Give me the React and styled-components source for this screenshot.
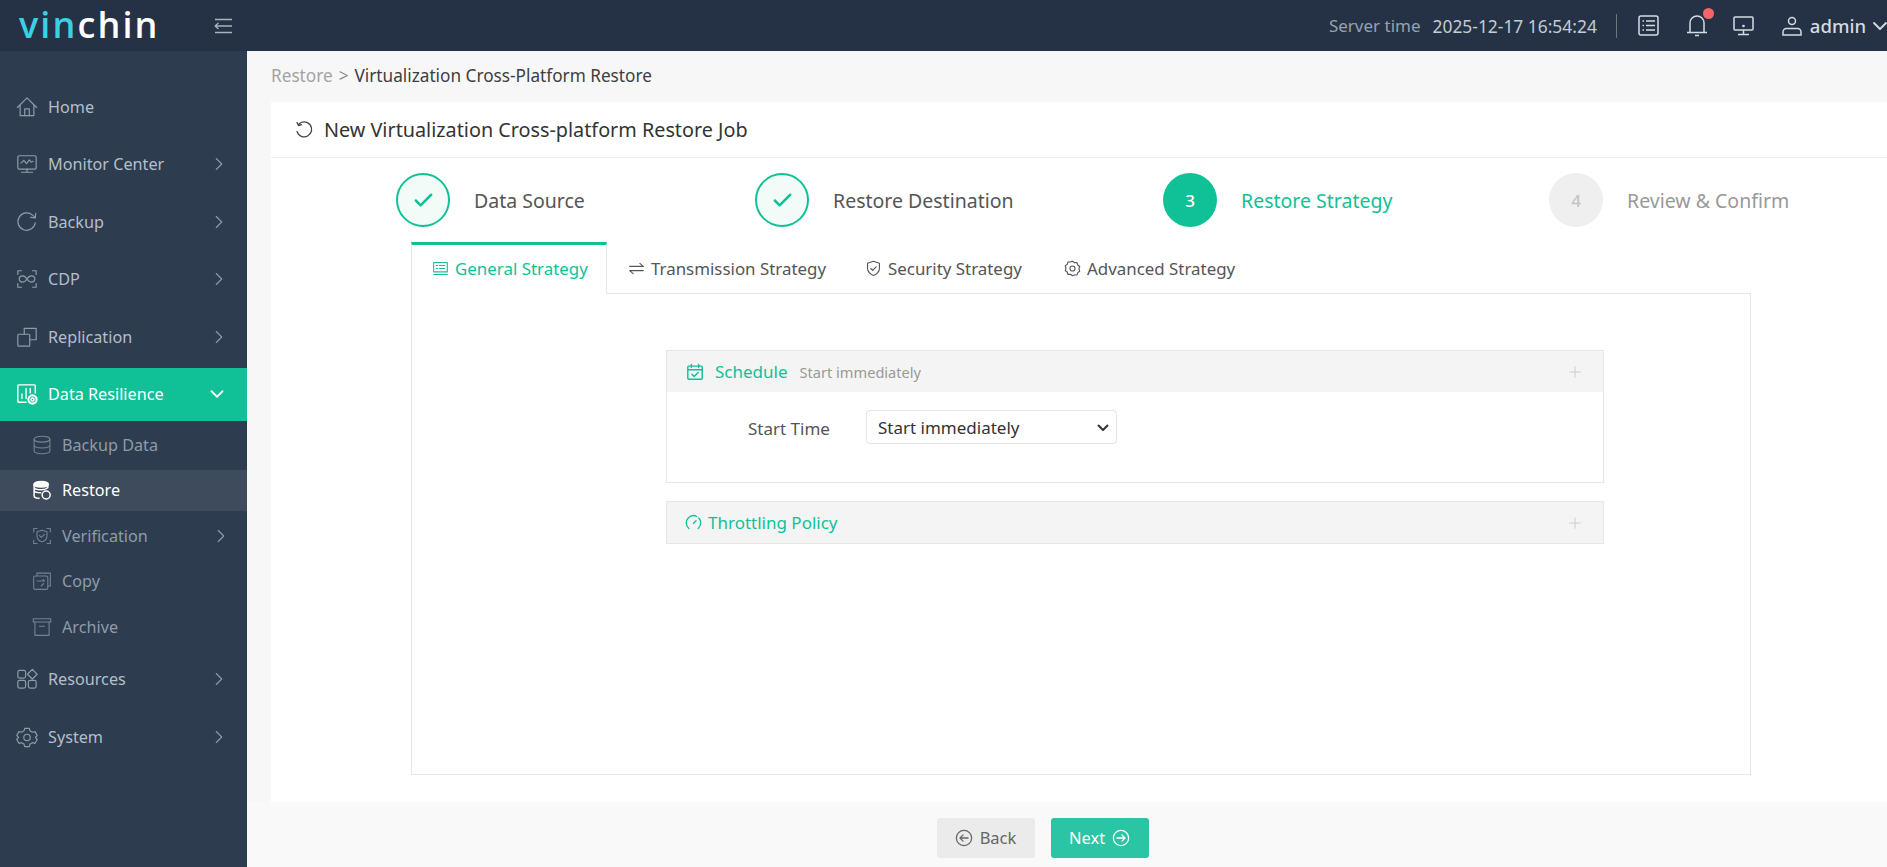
import React from "react";
import styled, { createGlobalStyle } from "styled-components";
import { ChevronRight, ChevronDown, Check, Plus } from "lucide-react";

const FONT = `"Noto Sans", "Noto Sans CJK SC", "Liberation Sans", sans-serif`;
const GREEN = "#10c197";
const SELECT_ARROW = `url("data:image/svg+xml,%3Csvg xmlns='http://www.w3.org/2000/svg' width='12' height='7' viewBox='0 0 12 7' fill='none' stroke='%23333' stroke-width='2'%3E%3Cpath d='M1 1l5 5 5-5'/%3E%3C/svg%3E")`;

const Global = createGlobalStyle`
  html, body { margin: 0; padding: 0; height: 100%; background: #fff; }
  body { font-family: ${FONT}; overflow: hidden; }
  #root { height: 100%; }
  * { box-sizing: border-box; }
`;

const Shell = styled.div`
  width: 1887px; height: 867px; display: grid;
  grid-template-rows: 51px 1fr; grid-template-columns: 247px 1fr;
`;

/* ---------- top bar ---------- */
const TopBar = styled.header`
  grid-column: 1 / -1; background: #253245; display: flex; align-items: center;
  padding-left: 19px; color: #c9d1da; overflow: hidden;
`;
const Logo = styled.div`
  width: 195px; font-family: "Open Sans", sans-serif; font-weight: 600; font-size: 36px; line-height: 49px;
  letter-spacing: 2.1px; color: #fff; align-self: flex-start;
`;
const LogoCyan = styled.span` color: #3bd0e2; `;
const TopRight = styled.div`
  margin-left: auto; display: flex; align-items: center; height: 100%;
`;
const ServerLabel = styled.span` font-size: 17px; color: #96a2ae; margin-right: 12px; `;
const ServerTime = styled.span` font-size: 17.4px; color: #c4ccd4; `;
const VDivider = styled.span` width: 1px; height: 24px; background: #69757f; margin: 0 21px 0 19px; `;
const TopIcon = styled.span`
  position: relative; display: inline-flex; margin-right: ${p => p.$mr}px; color: #d5dbe2;
`;
const Dot = styled.span`
  position: absolute; right: -6px; top: -6px; width: 11px; height: 11px; border-radius: 50%; background: #f5646a;
`;
const AdminName = styled.span` font-size: 18.5px; color: #d5dbe2; margin: 0 1.5px 0 8px; font-weight: 500; `;
const AdminArrow = styled.span` display: inline-flex; margin-right: -4.5px; color: #d5dbe2; `;

/* ---------- side bar ---------- */
const Side = styled.nav`
  background: #2e3c4f; padding-top: 29.5px; display: flex; flex-direction: column;
`;
const MenuItem = styled.div`
  height: 53px; margin-bottom: ${p => (p.$on ? 0 : 4.5)}px; flex: none; display: flex; align-items: center; padding-left: 16px; padding-right: ${p => (p.$on ? 19.5 : 17)}px;
  font-size: 16.2px; gap: 10px; padding-bottom: 1px;
  color: ${p => (p.$on ? "#fff" : "#b4bfca")};
  background: ${p => (p.$on ? GREEN : "transparent")};
  svg.ic { color: ${p => (p.$on ? "#fff" : "#8e9bab")}; flex: none; }
`;
const SubList = styled.div` padding: 3.5px 0 1px; `;
const SubItem = styled.div`
  height: 41px; margin-bottom: 4.5px; display: flex; align-items: center; padding-left: 32px; padding-right: 15px; gap: 10px;
  font-size: 16.2px; padding-bottom: 1px;
  color: ${p => (p.$on ? "#fff" : "#8e9bab")};
  background: ${p => (p.$on ? "#3e4b5c" : "transparent")};
  svg.ic { flex: none; color: ${p => (p.$on ? "#fff" : "#738396")}; }
`;
const Arrow = styled.span` margin-left: auto; display: inline-flex; color: ${p => (p.$on ? "#fff" : "#8e9bab")}; `;

/* ---------- main ---------- */
const Main = styled.main` display: flex; flex-direction: column; min-width: 0; background: #f7f7f7; `;
const Crumbs = styled.div`
  height: 51px; flex: none; padding: 0 0 2px 24px; display: flex; align-items: center; font-size: 17.2px; color: #3a3f45;
`;
const CrumbMuted = styled.span` color: #a3a3a3; margin-right: 6px; `;
const CrumbSep = styled.span` color: #8a8a8a; margin-right: 6px; `;
const Card = styled.section` margin-left: 24px; flex: 1; background: #fff; display: flex; flex-direction: column; min-height: 0; `;
const TitleRow = styled.div`
  height: 56px; flex: none; padding-left: 24px; display: flex; align-items: center; gap: 11px;
  border-bottom: 1px solid #eeeeee; font-size: 19.8px; color: #333;
`;
const Steps = styled.div` padding: 15px 0 0 125px; display: flex; height: 84px; flex: none; `;
const Step = styled.div` width: ${p => p.$w}px; flex: none; display: flex; align-items: flex-start; gap: 24px; `;
const Circle = styled.div`
  width: 54px; height: 54px; border-radius: 50%; flex: none; display: flex; align-items: center; justify-content: center;
  font-size: 17px; font-weight: 500;
  ${p => p.$kind === "done" && `border: 2px solid ${GREEN}; background: #f3fbf9; color: ${GREEN};`}
  ${p => p.$kind === "now" && `background: ${GREEN}; color: #fff;`}
  ${p => p.$kind === "todo" && `background: #efefef; color: #c4c4c4;`}
`;
const StepLabel = styled.div`
  font-size: 19.5px; line-height: 54px; padding-top: 1px;
  color: ${p => (p.$kind === "now" ? GREEN : p.$kind === "todo" ? "#999" : "#555")};
`;
const Tabs = styled.div` margin-left: 140px; display: flex; height: 51px; flex: none; position: relative; z-index: 1; `;
const Tab = styled.div`
  width: ${p => p.$w}px; flex: none; display: flex; align-items: center; gap: 6px; height: 52px; font-size: 16.9px; padding-left: ${p => p.$pl}px;
  color: ${p => (p.$on ? GREEN : "#555")};
  ${p => p.$on && `border-top: 3px solid ${GREEN}; border-left: 1px solid #e6e6e6; border-right: 1px solid #e6e6e6; background: #fff; padding-bottom: 2px;`}
`;
const Panel = styled.div`
  margin-left: 140px; width: 1340px; height: 482px; flex: none; border: 1px solid #e6e6e6; padding: 56px 0 0 254px;
`;
const Acc = styled.div` width: 938px; border: 1px solid #e6e6e6; margin-bottom: ${p => p.$mb || 0}px; `;
const AccHead = styled.div`
  height: ${p => p.$h}px; background: #f4f4f4; display: flex; align-items: center; padding: 0 19px 0 ${p => p.$pl}px; color: ${GREEN}; font-size: 17px;
`;
const AccLabel = styled.span` margin-left: ${p => p.$ml}px; `;
const AccHint = styled.span` font-size: 14.6px; color: #999; margin-left: 12px; `;
const PlusBox = styled.span` margin-left: auto; display: inline-flex; color: #c8c8c8; `;
const AccBody = styled.div` height: 90px; padding: 18px 0 0 81px; display: flex; align-items: flex-start; `;
const FieldLabel = styled.label` font-size: 17px; color: #555; width: 118px; line-height: 38px; `;
const Select = styled.select`
  width: 251px; height: 34px; border: 1px solid #e4e4e4; border-radius: 4px; color: #333;
  font-family: ${FONT}; font-size: 17px; padding: 0 0 0 11px; appearance: none;
  background: #fff ${SELECT_ARROW} no-repeat right 7px center;
`;
const Footer = styled.footer`
  height: 65px; flex: none; background: #f9f9f9; display: flex; justify-content: center; align-items: center; gap: 16px; padding: 6px 50px 0 1px;
`;
const Btn = styled.button`
  width: 98px; height: 40px; border: 0; border-radius: 3px; display: flex; align-items: center; justify-content: center; gap: 7px;
  font-family: ${FONT}; font-size: 16.5px; padding: 0;
  background: ${p => (p.$primary ? "#2bc4a4" : "#ebebeb")};
  color: ${p => (p.$primary ? "#fff" : "#666")};
`;

/* ---------- drawings ---------- */
const Ic = ({ size = 22, children, sw = 1.3 }) => (
  <svg className="ic" width={size} height={size} viewBox="0 0 24 24" fill="none" stroke="currentColor" strokeWidth={sw} strokeLinecap="round" strokeLinejoin="round">{children}</svg>
);
const HomeIc = () => <Ic><path d="M1.5 12.5 12 2l10.5 10.5M4.5 10v11.5h15V10" /><path d="M9.5 21.5V14h5v7.5" /></Ic>;
const MonitorIc = () => <Ic><rect x="2" y="3" width="20" height="14.5" rx="1.5" /><path d="M5.5 11l3-3 3 3.5 3-4 2 2.5 2-1M12 17.5v3M6 21h12" /></Ic>;
const BackupIc = () => <Ic><path d="M21 13a9.5 9.5 0 1 1-3-8.5L21 7" /><path d="M21.500 2.500 21 7.500l-5-.5" /></Ic>;
const CdpIc = () => <Ic><path d="M2 7V3h4M18 3h4v4M2 17v4h4M18 21h4v-4" /><path d="M12 12c-1.500-2.500-3-3.500-5-3.500a3.500 3.500 0 0 0 0 7c2 0 3.500-1 5-3.500s3-3.500 5-3.500a3.500 3.500 0 0 1 0 7c-2 0-3.500-1-5-3.500z" /></Ic>;
const ReplIc = () => <Ic><rect x="2" y="9" width="13" height="13" rx="1" /><path d="M9 9V2.500h13V15h-7" /></Ic>;
const ResilIc = () => (
  <Ic sw={1.5}>
    <path d="M11 21H3a1 1 0 0 1-1-1V3a1 1 0 0 1 1-1h17a1 1 0 0 1 1 1v8" />
    <path d="M6.500 17v-5M11 17V6M15.500 11V6" />
    <circle cx="18" cy="18" r="4.500" strokeWidth="2.200" strokeDasharray="2.200 1" />
    <circle cx="18" cy="18" r="1.700" />
  </Ic>
);
const DbIc = () => <Ic size={20}><ellipse cx="12" cy="5" rx="9.500" ry="3.500" /><path d="M2.500 5v14c0 2 4.300 3.500 9.500 3.500s9.500-1.500 9.500-3.500V5M2.500 12c0 2 4.300 3.500 9.500 3.500s9.500-1.500 9.500-3.500" /></Ic>;
const RestoreIc = () => (
  <Ic size={20} sw={1.8}>
    <ellipse cx="11" cy="5" rx="8.500" ry="3.300" fill="currentColor" />
    <path d="M2.500 5v14c0 2 3 3 6 3M2.500 12c0 2 3 3.300 8 3.300M2.500 8.500c0 2 3 3.300 8.500 3.300 3 0 6-1 8-2.500V5" />
    <circle cx="17" cy="18" r="4.800" fill="#3e4b5c" />
  </Ic>
);
const VerifyIc = () => <Ic size={20}><path d="M2 7V3h4M18 3h4v4M2 17v4h4M18 21h4v-4" /><path d="M12 5l6 2v5c0 3.500-2.500 6-6 7-3.500-1-6-3.500-6-7V7z" /><path d="M9 11.500l2.200 2.200L15 10" /></Ic>;
const CopyIc = () => <Ic size={20}><path d="M6 5V2.500h16V18h-3" /><rect x="2" y="6" width="17" height="16" rx="2" /><path d="M6 12h9l-2-2M14 15l-3 3" /></Ic>;
const ArchiveIc = () => <Ic size={20}><rect x="1.500" y="2" width="21" height="4" /><path d="M3.500 6v16h17V6M9 11h6" /></Ic>;
const ResIc = () => <Ic><rect x="2" y="2.500" width="8.500" height="8.500" rx="2" /><rect x="2" y="13.500" width="8.500" height="8.500" rx="2" /><rect x="13.500" y="13.500" width="8.500" height="8.500" rx="2" /><path d="M17.800 1.500 23 6.800l-5.200 5.200-5.300-5.200z" /></Ic>;
const GearIc = ({ size = 22 }) => (
  <Ic size={size}>
    <path d="M9.500 2.500h5l.8 2.800 2.600 1.500 2.900-.7 2.400 4.200-2 2.200v0l2 2.200-2.400 4.200-2.900-.7-2.600 1.500-.8 2.800h-5l-.8-2.800-2.600-1.500-2.900.7L.8 14.700l2-2.200-2-2.200L3.200 6.100l2.900.7 2.600-1.500z" />
    <circle cx="12" cy="12.500" r="3.500" />
  </Ic>
);
const MenuFold = () => (
  <svg width="18" height="16" viewBox="0 0 18 16" fill="none" stroke="#a9b3be" strokeWidth="1.300" style={{ flex: "none" }}>
    <path d="M1 1.500h17M1 14.500h17M1 8h17M1 8l3.500-3M1 8l3.500 3" />
  </svg>
);

const Tiny = ({ size = 17, children, sw = 1.300 }) => (
  <svg width={size} height={size} viewBox="0 0 20 20" fill="none" stroke="currentColor" strokeWidth={sw} strokeLinecap="round" strokeLinejoin="round" style={{ flex: "none" }}>{children}</svg>
);
const ListTab = () => <Tiny><rect x="2" y="3" width="16" height="11" /><path d="M5 6.500h1.500M8.500 6.500H15M5 10h1.500M8.500 10H15M2 17h16" /></Tiny>;
const SwapTab = () => <Tiny><path d="M2 7.500h16L14 4M18 12.500H2L6 16" /></Tiny>;
const ShieldTab = () => <Tiny><path d="M10 1.500l7 2.300v6c0 4-3 6.800-7 8.500-4-1.700-7-4.500-7-8.500v-6z" /><path d="M6.800 10l2.300 2.300 4-4.300" /></Tiny>;
const AdvTab = () => <Tiny><path d="M10 1.500l2.400 1.700 2.900-.1.900 2.800 2.300 1.700-.9 2.800.9 2.800-2.300 1.700-.9 2.800-2.900-.1L10 18.500l-2.400-1.700-2.900.1-.9-2.800-2.300-1.700.9-2.800-.9-2.800 2.300-1.700.9-2.800 2.900.1z" /><circle cx="10" cy="10" r="3" /></Tiny>;
const CalIc = () => <Tiny size={18} sw={1.600}><rect x="2" y="3.500" width="16" height="14.500" rx="1" /><path d="M2 7.500h16M6 1.500v3.500M14 1.500v3.500M6.500 12.500l2.500 2.500 4.500-4.500" /></Tiny>;
const GaugeIc = () => <Tiny size={17} sw={1.600}><path d="M4.500 17a8.500 8.500 0 1 1 11 0" strokeDasharray="24 3 30" /><path d="M10 11l3-3" /></Tiny>;
const CircleArrow = ({ dir }) => (
  <Tiny size={18} sw={1.400}>
    <circle cx="10" cy="10" r="8.500" />
    {dir === "l" ? <path d="M14.500 10h-9M9 6.500 5.500 10 9 13.500" /> : <path d="M5.500 10h9M11 6.500l3.500 3.500-3.500 3.500" />}
  </Tiny>
);
const RefreshTitle = () => (
  <svg width="18" height="18" viewBox="0 0 18 18" fill="none" stroke="#444" strokeWidth="1.300" strokeLinecap="round" strokeLinejoin="round" style={{ flex: "none" }}>
    <path d="M3.500 3.500A7.500 7.500 0 1 1 2 10.500" /><path d="M2 1.500l1.500 3 3-.800" />
  </svg>
);
const Right = () => <Arrow><ChevronRight size={22} strokeWidth={1.200} /></Arrow>;

const menu = [
  { t: "Home", I: HomeIc },
  { t: "Monitor Center", I: MonitorIc, a: 1 },
  { t: "Backup", I: BackupIc, a: 1 },
  { t: "CDP", I: CdpIc, a: 1 },
  { t: "Replication", I: ReplIc, a: 1 },
];
const subs = [
  { t: "Backup Data", I: DbIc },
  { t: "Restore", I: RestoreIc, on: 1 },
  { t: "Verification", I: VerifyIc, a: 1 },
  { t: "Copy", I: CopyIc },
  { t: "Archive", I: ArchiveIc },
];

export default function App() {
  return (
    <>
      <Global />
      <Shell>
        <TopBar>
          <Logo><LogoCyan>vin</LogoCyan>chin</Logo>
          <MenuFold />
          <TopRight>
            <ServerLabel>Server time</ServerLabel>
            <ServerTime>2025-12-17 16:54:24</ServerTime>
            <VDivider />
            <TopIcon $mr={27}>
              <svg width="21" height="21" viewBox="0 0 21 21" fill="none" stroke="currentColor" strokeWidth="1.500"><rect x="1" y="1" width="19" height="19" rx="2" /><path d="M4.500 6h1.500M8 6h9M4.500 10.500h1.500M8 10.500h9M4.500 15h1.500M8 15h9" /></svg>
            </TopIcon>
            <TopIcon $mr={25}>
              <svg width="22" height="23" viewBox="0 0 22 23" fill="none" stroke="currentColor" strokeWidth="1.500"><path d="M1 18.500h20M4 18.500V9a7 7 0 0 1 14 0v9.500M9 21.500h4" /></svg>
              <Dot />
            </TopIcon>
            <TopIcon $mr={28}>
              <svg width="21" height="21" viewBox="0 0 21 21" fill="none" stroke="currentColor" strokeWidth="1.500"><rect x="1" y="2" width="19" height="13" rx="1" /><path d="M10.500 15v4M5 19.500h11" /><circle cx="10.500" cy="11" r=".6" /></svg>
            </TopIcon>
            <TopIcon $mr={0}>
              <svg width="20" height="20" viewBox="0 0 20 20" fill="none" stroke="currentColor" strokeWidth="1.500"><circle cx="10" cy="5" r="3.500" /><path d="M1 19v-3a3.500 3.500 0 0 1 3.500-3.500h11A3.500 3.500 0 0 1 19 16v3z" /></svg>
            </TopIcon>
            <AdminName>admin</AdminName>
            <AdminArrow><ChevronDown size={24} strokeWidth={1.800} /></AdminArrow>
          </TopRight>
        </TopBar>

        <Side>
          {menu.map(({ t, I, a }) => (
            <MenuItem key={t}>
              <I />{t}
              {a && <Right />}
            </MenuItem>
          ))}
          <MenuItem $on>
            <ResilIc />Data Resilience
            <Arrow $on><ChevronDown size={22} strokeWidth={2} /></Arrow>
          </MenuItem>
          <SubList>
            {subs.map(({ t, I, on, a }) => (
              <SubItem key={t} $on={on}>
                <I />{t}
                {a && <Right />}
              </SubItem>
            ))}
          </SubList>
          <MenuItem><ResIc />Resources<Right /></MenuItem>
          <MenuItem><GearIc />System<Right /></MenuItem>
        </Side>

        <Main>
          <Crumbs>
            <CrumbMuted>Restore</CrumbMuted><CrumbSep>&gt;</CrumbSep>Virtualization Cross-Platform Restore
          </Crumbs>
          <Card>
            <TitleRow><RefreshTitle />New Virtualization Cross-platform Restore Job</TitleRow>
            <Steps>
              <Step $w={359}><Circle $kind="done"><Check size={23} strokeWidth={2.6} /></Circle><StepLabel>Data Source</StepLabel></Step>
              <Step $w={408}><Circle $kind="done"><Check size={23} strokeWidth={2.6} /></Circle><StepLabel>Restore Destination</StepLabel></Step>
              <Step $w={386}><Circle $kind="now">3</Circle><StepLabel $kind="now">Restore Strategy</StepLabel></Step>
              <Step $w={300}><Circle $kind="todo">4</Circle><StepLabel $kind="todo">Review &amp; Confirm</StepLabel></Step>
            </Steps>
            <Tabs>
              <Tab $on $w={196} $pl={20}><ListTab />General Strategy</Tab>
              <Tab $w={236} $pl={21}><SwapTab />Transmission Strategy</Tab>
              <Tab $w={201} $pl={22}><ShieldTab />Security Strategy</Tab>
              <Tab $w={200} $pl={20}><AdvTab />Advanced Strategy</Tab>
            </Tabs>
            <Panel>
              <Acc $mb={18}>
                <AccHead $h={41} $pl={19}><CalIc /><AccLabel $ml={11}>Schedule</AccLabel><AccHint>Start immediately</AccHint><PlusBox><Plus size={18} strokeWidth={1.200} /></PlusBox></AccHead>
                <AccBody>
                  <FieldLabel>Start Time</FieldLabel>
                  <Select defaultValue="now"><option value="now">Start immediately</option></Select>
                </AccBody>
              </Acc>
              <Acc>
                <AccHead $h={41} $pl={18}><GaugeIc /><AccLabel $ml={6}>Throttling Policy</AccLabel><PlusBox><Plus size={18} strokeWidth={1.200} /></PlusBox></AccHead>
              </Acc>
            </Panel>
          </Card>
          <Footer>
            <Btn><CircleArrow dir="l" />Back</Btn>
            <Btn $primary>Next<CircleArrow dir="r" /></Btn>
          </Footer>
        </Main>
      </Shell>
    </>
  );
}
